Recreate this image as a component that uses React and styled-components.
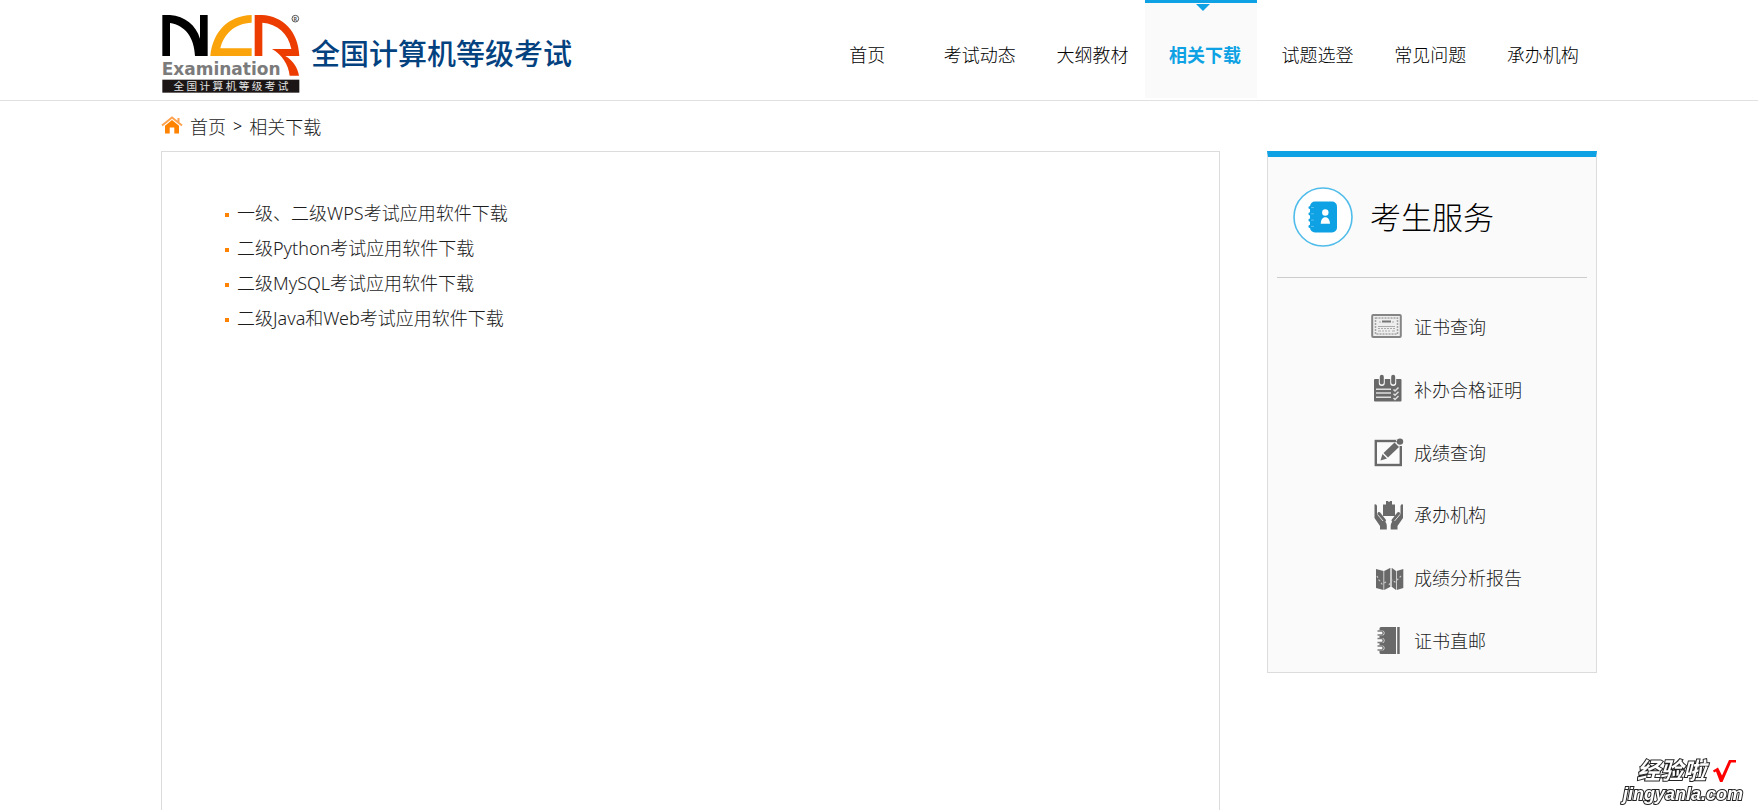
import React from 'react';
import styled, { createGlobalStyle } from 'styled-components';

const BLUE = '#0ea2e4';
const ORANGE = '#ff8200';
const GRAY = '#696969';
const INK = '#1c1c1c';
const LINE = '#dcdcdc';
const PANEL = '#fafafa';

const GlobalStyle = createGlobalStyle`
  * { box-sizing: border-box; }
  body {
    margin: 0;
    background: #fff;
    color: #000;
    font-family: "Noto Sans", "Noto Sans CJK SC", sans-serif;
    font-size: 18px;
    font-weight: 300;
  }
  a { color: inherit; text-decoration: none; }
  ul { list-style: none; margin: 0; padding: 0; }
`;

const Page = styled.div`
  min-height: 100vh;
  display: flex;
  flex-direction: column;
`;

const Container = styled.div`
  width: 100%;
  max-width: 1436px;
  margin: 0 auto;
`;

const Header = styled.header`
  border-bottom: 1px solid #e1e1e1;
`;

const HeaderRow = styled(Container)`
  height: 100px;
  display: flex;
  justify-content: space-between;
`;

const Brand = styled.a`
  display: flex;
  align-items: center;
  gap: 11px;
  padding-top: 6px;
`;

const BrandName = styled.span`
  padding-bottom: 2px;
  color: #04427f;
  font-family: "Noto Sans CJK SC", sans-serif;
  font-size: 29px;
  font-weight: 500;
  line-height: 32px;
  white-space: nowrap;
`;

const Nav = styled.nav`
  flex: 0 1 788px;
  display: flex;
  margin-right: 2px;
`;

const NavLink = styled.a`
  position: relative;
  flex: 1;
  height: 98px;
  display: flex;
  align-items: center;
  justify-content: center;
  padding: 6px 0 0 8px;
  white-space: nowrap;
  border-top: 3px solid ${(p) => (p.$active ? BLUE : 'transparent')};
  background: ${(p) => (p.$active ? PANEL : 'transparent')};
  color: ${(p) => (p.$active ? BLUE : '#000')};
  font-weight: ${(p) => (p.$active ? 700 : 300)};
`;

const Pointer = styled.span`
  position: absolute;
  top: 1px;
  left: 50%;
  margin-left: -5px;
  border: 7px solid transparent;
  border-top-color: ${BLUE};
  border-bottom: 0;
`;

const Breadcrumb = styled.nav`
  height: 50px;
  display: flex;
  align-items: center;
  gap: 7px;
  padding-bottom: 1px;
  color: ${INK};
`;

const Separator = styled.span`
  color: #000;
  font-size: 16px;
`;

const Content = styled(Container)`
  flex: 1;
  display: flex;
  flex-direction: column;
`;

const Columns = styled.div`
  flex: 1;
  display: flex;
  align-items: stretch;
  gap: 47px;
`;

const Downloads = styled.main`
  flex: 1;
  border: 1px solid ${LINE};
  border-bottom: 0;
  padding: 45px 63px;
`;

const DownloadItem = styled.li`
  display: flex;
  align-items: center;
  gap: 8px;
  height: 35px;
  color: ${INK};

  &::before {
    content: "";
    width: 4px;
    height: 4px;
    background: ${ORANGE};
  }
`;

const DownloadLink = styled.a`
  padding-bottom: 6px;
`;

const Sidebar = styled.aside`
  align-self: flex-start;
  flex: 0 0 330px;
  padding: 0 9px;
  border: 1px solid ${LINE};
  border-top: 6px solid ${BLUE};
  background: ${PANEL};
`;

const SidebarHead = styled.div`
  height: 121px;
  display: flex;
  align-items: center;
  gap: 17px;
  padding: 0 0 1px 16px;
  border-bottom: 1px solid #ccc;
`;

const SidebarTitle = styled.h2`
  margin: 0;
  font-size: 31px;
  font-weight: 300;
  line-height: 36px;
`;

const ServiceList = styled.ul`
  height: 376px;
  margin-top: 18px;
  padding-left: 94px;
  display: grid;
  grid-template-rows: repeat(6, 1fr);
`;

const ServiceLink = styled.a`
  height: 100%;
  display: flex;
  align-items: center;
  gap: 9px;
  color: ${INK};
`;

const ServiceName = styled.span`
  padding-bottom: 2px;
`;

const Watermark = styled.div`
  position: fixed;
  right: 15px;
  bottom: 6px;
  display: flex;
  flex-direction: column;
  align-items: flex-end;
`;

const WatermarkTop = styled.div`
  display: flex;
  align-items: center;
  gap: 6px;
  padding-right: 6px;
`;

const WatermarkText = styled.span`
  color: #fff;
  font-family: "Liberation Sans", "Noto Sans CJK SC", sans-serif;
  font-size: ${(p) => p.$size}px;
  font-weight: 700;
  font-style: italic;
  line-height: ${(p) => p.$line}px;
  -webkit-text-stroke: 2px #222;
  paint-order: stroke fill;
`;

const LogoMark = () => (
  <svg width="139" height="81" viewBox="33 39 417 243" role="img" aria-label="NCR Examination">
    <path fill="#000" d="M37 45H60C105 48 138 76 150 116V45H173V168H135C133 112 105 76 60 69V168H37Z" />
    <path fill="#fba30a" d="M181 168C188 95 235 47 305 45V68C255 70 222 100 211 145H305V168Z" />
    <path fill="#ec3c00" d="M314 45H335C400 48 445 95 448 168H406C430 182 443 204 447 227H419C416 195 396 164 366 147H424C415 100 382 72 337 68V168H314Z" />
    <circle cx="436" cy="56" r="10" fill="none" stroke="#555" strokeWidth="3" />
    <text x="436" y="62" fontSize="16" fontWeight="700" fill="#555" textAnchor="middle">R</text>
    <text x="35" y="226" fontFamily="DejaVu Sans" fontSize="51" fontWeight="700" fill="#7b7b7b">Examination</text>
    <rect x="37" y="239" width="411" height="39" fill="#1c1716" />
    <text x="243" y="270" fontFamily="Noto Sans CJK SC" fontSize="32" fontWeight="400" fill="#e6e6e6" textAnchor="middle">全 国 计 算 机 等 级 考 试</text>
  </svg>
);

const HomeIcon = () => (
  <svg width="22" height="20" viewBox="0 0 22 20" aria-hidden="true">
    <path d="M1 9.500 11 1.500 21 9.500M17.500 2V6.500" fill="none" stroke="#ffa24d" strokeWidth="2" />
    <path d="M4 9.800 11 4 18 9.800V17.500H13.300V11.500H8.700V17.500H4Z" fill={ORANGE} />
  </svg>
);

const ContactsBadge = () => (
  <svg width="60" height="60" viewBox="0 0 60 60" aria-hidden="true">
    <circle cx="30" cy="30" r="29" fill="#fff" stroke="#4fbcea" strokeWidth="1.6" />
    <rect x="17" y="14.5" width="27" height="31" rx="5" fill={BLUE} />
    <path d="M17 20.5H20M17 26.8H20M17 33.1H20M17 39.4H20" stroke={BLUE} strokeWidth="3.2" strokeLinecap="round" />
    <path d="M18.5 20.5H20.5M18.5 26.8H20.5M18.5 33.1H20.5M18.5 39.4H20.5" stroke="#5cc1ed" strokeWidth="1" strokeLinecap="round" />
    <circle cx="32.3" cy="25.5" r="3.2" fill="#fff" />
    <path d="M27.7 36.8C28 32.5 29.5 30.3 32.3 30.3S36.6 32.5 37 36.8Z" fill="#fff" />
  </svg>
);

const ServiceIcon = ({ children }) => (
  <svg width="34" height="32" viewBox="0 0 34 32" fill={GRAY} aria-hidden="true">
    {children}
  </svg>
);

const CertificateIcon = () => (
  <ServiceIcon>
    <rect x="1.2" y="4" width="28.6" height="22" rx="1" fill="#eee" stroke="#858585" strokeWidth="2" />
    <rect x="4.5" y="7" width="22" height="16" fill="none" stroke="#a5a5a5" strokeWidth="1.5" strokeDasharray="2 1" />
    <path d="M8 11H10M21 11H23M7 15.5H24M7 20H10M21 20H24" stroke="#aaa" />
    <path d="M11 10.5H20" stroke="#777" strokeWidth="2" />
    <path d="M7 17.5H24M11 20H20" stroke="#aaa" strokeDasharray="2 1" />
  </ServiceIcon>
);

const CalendarIcon = () => (
  <ServiceIcon>
    <rect x="3" y="5" width="27.5" height="22.5" rx="1" />
    <path d="M10.8 3V9M22.2 3V9" stroke={PANEL} strokeWidth="6" strokeLinecap="round" />
    <path d="M10.8 2.8V8.5M22.2 2.8V8.5" stroke={GRAY} strokeWidth="4" strokeLinecap="round" />
    <path d="M5 15.2H20M5 19H20M5 23.3H20M22.5 15.5 24 17 27.5 13.5M22.5 19.7 24 21.2 27.5 17.7M22.5 24 24 25.5 27.5 22" fill="none" stroke="#ddd" strokeWidth="1.5" />
  </ServiceIcon>
);

const EditIcon = () => (
  <ServiceIcon>
    <rect x="4.8" y="4" width="25" height="24" fill="none" stroke={GRAY} strokeWidth="2.4" />
    <path d="M24.5 2.800H28L31.500 7V9H28.600Z" fill={PANEL} />
    <path d="M9.500 23.500 11.500 17 16 21.500Z" />
    <path d="M12.500 16 23.500 5.500 28 10 17 20.500Z" />
    <circle cx="29" cy="4.600" r="3.200" />
  </ServiceIcon>
);

const HandsIcon = () => (
  <ServiceIcon>
    <path d="M12 5.500H15V2H17.300V3H18.700V2H21V5.500H24V17H12Z" />
    <path d="M3.500 5.500Q5.500 4.500 6 7V14.500L14.500 23Q15.800 24.500 15.800 27V30.500H9V27L3.500 19Z" />
    <path d="M32 5.500Q30 4.500 29.500 7V14.500L21 23Q19.700 24.500 19.700 27V30.500H26.500V27L32 19Z" />
    <path d="M8 14.500 13.500 21.500M27.500 14.500 22 21.500" stroke={GRAY} strokeWidth="3" strokeLinecap="round" />
    <path d="M6.500 15.500 12 22M29 15.500 23.500 22" stroke="#ddd" strokeWidth="1" />
  </ServiceIcon>
);

const ReportIcon = () => (
  <ServiceIcon>
    <path d="M5 7 12.500 9V28L5 26Z" />
    <path d="M13.200 9 19 6V25L13.200 28Z" />
    <path d="M21 6 25 9V28L21 25Z" />
    <path d="M25.700 9 32.300 7V26L25.700 28Z" />
    <path d="M20 6V25" stroke="#999" />
    <path d="M6 14 8 18 11 22 15 20M18 23 21 18 24 20 27 17 30 14" fill="none" stroke="#c8c8c8" strokeWidth="1.2" strokeDasharray="2 2" />
  </ServiceIcon>
);

const NotebookIcon = () => (
  <ServiceIcon>
    <path d="M10 2H25V29H10Q8.500 29 8.500 27.500V3.500Q8.500 2 10 2ZM26.200 2H28.700V29H26.200Z" />
    <path d="M6 8H11M6 15.500H11M6 23H11" stroke={PANEL} strokeWidth="5" strokeLinecap="round" />
    <path d="M6.500 6H11Q13.500 8 11 10H6.500M6.500 13.500H11Q13.500 15.500 11 17.500H6.500M6.500 21H11Q13.500 23 11 25H6.500" fill="none" stroke="#7c7c7c" strokeWidth="1.6" />
  </ServiceIcon>
);

const CheckMark = () => (
  <svg width="25" height="26" viewBox="0 0 25 26" aria-hidden="true">
    <path d="M1 12.500 6 9.500 10 17.500 17 2H24V4.500H19L10.500 24H8L4 13.500 2 14.500Z" fill="#f00" />
  </svg>
);

const navItems = ['首页', '考试动态', '大纲教材', '相关下载', '试题选登', '常见问题', '承办机构'];

const downloads = [
  '一级、二级WPS考试应用软件下载',
  '二级Python考试应用软件下载',
  '二级MySQL考试应用软件下载',
  '二级Java和Web考试应用软件下载',
];

const services = [
  ['证书查询', CertificateIcon],
  ['补办合格证明', CalendarIcon],
  ['成绩查询', EditIcon],
  ['承办机构', HandsIcon],
  ['成绩分析报告', ReportIcon],
  ['证书直邮', NotebookIcon],
];

export default function App() {
  return (
    <Page lang="zh-CN">
      <GlobalStyle />
      <Header>
        <HeaderRow>
          <Brand href="#">
            <LogoMark />
            <BrandName>全国计算机等级考试</BrandName>
          </Brand>
          <Nav>
            {navItems.map((label) => {
              const active = label === '相关下载';
              return (
                <NavLink key={label} href="#" $active={active}>
                  {active && <Pointer />}
                  {label}
                </NavLink>
              );
            })}
          </Nav>
        </HeaderRow>
      </Header>
      <Content>
        <Breadcrumb>
          <HomeIcon />
          <a href="#">首页</a>
          <Separator>&gt;</Separator>
          <a href="#">相关下载</a>
        </Breadcrumb>
        <Columns>
          <Downloads>
            <ul>
              {downloads.map((label) => (
                <DownloadItem key={label}>
                  <DownloadLink href="#">{label}</DownloadLink>
                </DownloadItem>
              ))}
            </ul>
          </Downloads>
          <Sidebar>
            <SidebarHead>
              <ContactsBadge />
              <SidebarTitle>考生服务</SidebarTitle>
            </SidebarHead>
            <ServiceList>
              {services.map(([label, Icon]) => (
                <li key={label}>
                  <ServiceLink href="#">
                    <Icon />
                    <ServiceName>{label}</ServiceName>
                  </ServiceLink>
                </li>
              ))}
            </ServiceList>
          </Sidebar>
        </Columns>
      </Content>
      <Watermark>
        <WatermarkTop>
          <WatermarkText $size={23} $line={24}>经验啦</WatermarkText>
          <CheckMark />
        </WatermarkTop>
        <WatermarkText $size={18} $line={20}>jingyanla.com</WatermarkText>
      </Watermark>
    </Page>
  );
}
